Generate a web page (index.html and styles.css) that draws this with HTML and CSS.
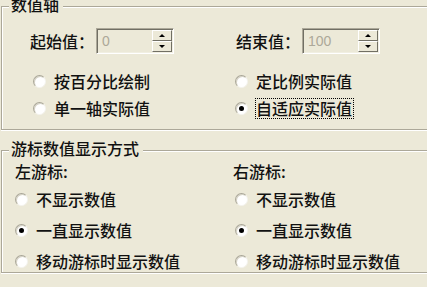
FILE: index.html
```html
<!DOCTYPE html>
<html lang="zh-CN">
<head>
<meta charset="utf-8">
<title>数值轴</title>
<link rel="stylesheet" href="styles.css">
</head>
<body>
<div class="panel">
  <div class="group g1">
    <div class="legend">数值轴</div>
    <div class="body g1-body">
      <div class="col">
        <div class="spin-row">
          <span class="spin-label">起始值：</span>
          <div class="spin"><span class="spin-value">0</span><div class="spin-btns"><span class="spin-btn up"></span><span class="spin-btn down"></span></div></div>
        </div>
        <div class="radios r-left1">
          <label class="radio"><span class="rb"></span><span>按百分比绘制</span></label>
          <label class="radio"><span class="rb"></span><span>单一轴实际值</span></label>
        </div>
      </div>
      <div class="col">
        <div class="spin-row sr-right">
          <span class="spin-label">结束值：</span>
          <div class="spin"><span class="spin-value">100</span><div class="spin-btns"><span class="spin-btn up"></span><span class="spin-btn down"></span></div></div>
        </div>
        <div class="radios r-right1">
          <label class="radio"><span class="rb"></span><span>定比例实际值</span></label>
          <label class="radio"><span class="rb checked"></span><span class="focus">自适应实际值</span></label>
        </div>
      </div>
    </div>
  </div>

  <div class="group g2">
    <div class="legend">游标数值显示方式</div>
    <div class="body g2-body">
      <div class="col">
        <div class="sub-label">左游标:</div>
        <div class="radios2">
          <label class="radio"><span class="rb"></span><span>不显示数值</span></label>
          <label class="radio"><span class="rb checked"></span><span>一直显示数值</span></label>
          <label class="radio"><span class="rb"></span><span>移动游标时显示数值</span></label>
        </div>
      </div>
      <div class="col">
        <div class="sub-label">右游标:</div>
        <div class="radios2 r-right2">
          <label class="radio"><span class="rb"></span><span>不显示数值</span></label>
          <label class="radio"><span class="rb checked"></span><span>一直显示数值</span></label>
          <label class="radio"><span class="rb"></span><span>移动游标时显示数值</span></label>
        </div>
      </div>
    </div>
  </div>
</div>
</body>
</html>
```
FILE: styles.css
```css
html, body {
  margin: 0;
  padding: 0;
}
body {
  background: #ece9d8;
  font-family: "Noto Sans CJK SC", "Noto Sans", sans-serif;
  font-size: 16px;
  font-weight: 500;
  color: #111;
  width: 427px;
  height: 287px;
  overflow: hidden;
}
.panel {
  padding: 6px 0 0 1px;
}
.group {
  border: 1px solid #aca899;
  border-right: 0;
  box-shadow: inset 1px 1px 0 #fff, 0 1px 0 #fff;
}
.g2 {
  margin-top: 20px;
}
.legend {
  display: block;
  width: max-content;
  margin: -11px 0 0 7px;
  padding: 0 4px 0 2px;
  height: 17px;
  line-height: 16px;
  background: #ece9d8;
  white-space: nowrap;
}
.body {
  display: grid;
}
.g1-body {
  grid-template-columns: 204px 1fr;
  padding: 15px 0 10px 28px;
}
.g2-body {
  grid-template-columns: 218px 1fr;
  padding: 0 0 0 13px;
}
.col {
  display: flex;
  flex-direction: column;
}
.spin-row {
  display: flex;
  align-items: center;
  height: 26px;
}
.sr-right {
  margin-left: 2px;
}
.spin-label {
  width: 66px;
  white-space: nowrap;
}
.spin {
  box-sizing: border-box;
  width: 78px;
  height: 26px;
  display: flex;
  align-items: stretch;
  border: 1px solid;
  border-color: #aca899 #fff #fff #aca899;
  box-shadow: inset 1px 1px 0 #716f64, inset -1px -1px 0 #f1efe2;
  padding: 1px;
}
.spin-value {
  flex: 1;
  font-family: "Liberation Sans", Arial, sans-serif;
  font-weight: 400;
  font-size: 14px;
  line-height: 22px;
  color: #aca899;
  padding-left: 4px;
}
.spin-btns {
  width: 20px;
  display: flex;
  flex-direction: column;
}
.spin-btn {
  flex: 1;
  box-sizing: border-box;
  border: 1px solid;
  border-color: #fff #716f64 #716f64 #fff;
  background: #ece9d8;
  display: flex;
  align-items: center;
  justify-content: center;
}
.spin-btn::after {
  content: "";
  width: 0;
  height: 0;
  border-left: 3px solid transparent;
  border-right: 3px solid transparent;
}
.spin-btn.up::after {
  border-bottom: 3px solid #000;
}
.spin-btn.down::after {
  border-top: 3px solid #000;
}
.radios {
  display: flex;
  flex-direction: column;
  gap: 5px;
  margin-top: 16px;
}
.r-left1 {
  margin-left: 3px;
}
.r-right1 {
  margin-left: 1px;
}
.radio {
  display: flex;
  align-items: center;
  gap: 8px;
  height: 22px;
  white-space: nowrap;
}
.rb {
  position: relative;
  box-sizing: border-box;
  width: 13px;
  height: 13px;
  flex: none;
  border-radius: 50%;
  background: #fff;
  border: 1px solid;
  border-color: #a9a697 #f4f3ee #f4f3ee #a9a697;
  box-shadow: inset 1px 1px 0 #d6d3c6;
}
.rb.checked::after {
  content: "";
  position: absolute;
  left: 3px;
  top: 3px;
  width: 5px;
  height: 5px;
  border-radius: 50%;
  background: #000;
}
.focus {
  display: inline-block;
  line-height: 19px;
  padding-right: 1px;
  outline: 1px dotted #000;
}
.sub-label {
  margin-top: 4px;
  height: 20px;
  line-height: 20px;
  white-space: nowrap;
}
.radios2 {
  display: flex;
  flex-direction: column;
  gap: 9px;
  margin-top: 7px;
}
.r-right2 {
  margin-left: 2px;
}
```
